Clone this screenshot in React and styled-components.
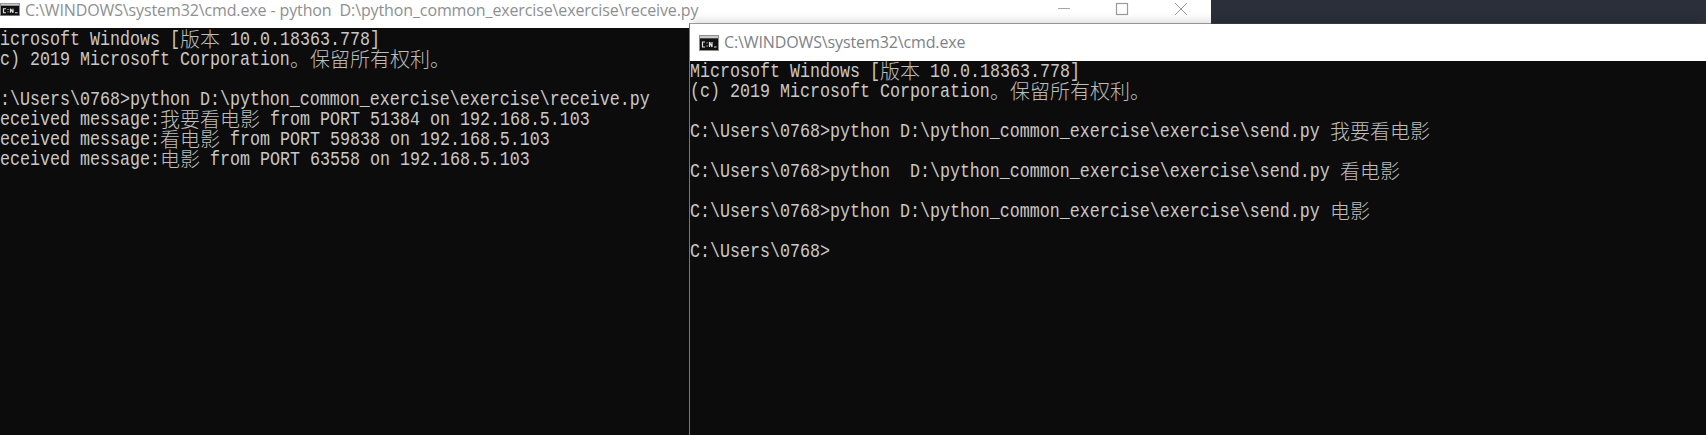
import React from 'react';
import styled, { createGlobalStyle } from 'styled-components';

const Global = createGlobalStyle`
  html, body { margin: 0; padding: 0; background: #0c0c0c; }
  #root { width: 1706px; height: 435px; }
`;

const Desktop = styled.div`
  position: relative;
  width: 1706px;
  height: 435px;
  overflow: hidden;
  background: linear-gradient(#2a2f3a, #272c37);
`;

const Window = styled.section`
  position: absolute;
  display: flex;
  flex-direction: column;
  left: ${p => p.$left}px;
  top: ${p => p.$top}px;
  width: ${p => p.$width}px;
  height: ${p => p.$height}px;
  overflow: ${p => (p.$front ? 'visible' : 'hidden')};
  background: #0c0c0c;
  background-clip: padding-box;
  ${p => p.$front && `
    box-sizing: border-box;
    border-left: 1px solid #777;
    border-top: 1px solid rgba(70, 70, 70, 0.5);
    box-shadow: 0 -6px 8px -3px rgba(0, 0, 0, 0.13);
  `}
`;

const TitleBar = styled.header`
  flex: none;
  display: flex;
  align-items: ${p => (p.$front ? 'center' : 'flex-start')};
  height: ${p => p.$height}px;
  box-sizing: border-box;
  padding-left: ${p => p.$pad}px;
  background: #fff;
  font-family: "Open Sans", "Noto Sans", sans-serif;
  font-size: 16px;
  white-space: pre;
`;

const TitleText = styled.span`
  margin-left: 5px;
  margin-bottom: ${p => (p.$front ? 2 : 0)}px;
  line-height: 20px;
  letter-spacing: -0.12px;
  color: ${p => (p.$front ? '#7d8289' : '#8d8f91')};
`;

const WinControls = styled.div`
  margin-left: auto;
  display: flex;
  width: 153px;
`;

const Console = styled.div`
  flex: 1;
  padding-top: ${p => p.$top}px;
  margin-left: ${p => p.$shift}px;
  background: #0c0c0c;
  color: #c8c8c8;
  line-height: 20px;
  white-space: pre;
`;

const Line = styled.div`
  display: flex;
  height: 20px;
`;

const Latin = styled.span`
  flex: none;
  display: block;
  width: ${p => p.$n * 10}px;
  font-family: "Liberation Mono", monospace;
  font-size: 16.66px;
  transform: scaleY(1.2);
  transform-origin: center;
`;

const Cjk = styled.span`
  flex: none;
  width: ${p => p.$n * 20}px;
  font-family: "Noto Sans CJK SC", sans-serif;
  font-weight: 300;
  font-size: 20px;
  line-height: 18px;
  color: #bdbdbd;
`;

const Svg = styled.svg`
  flex: none;
  display: block;
  margin-top: ${p => p.$top}px;
`;

const CmdIcon = ({ top, height }) => (
  <Svg $top={top} width="20" height={height} viewBox="0 0 20 16" preserveAspectRatio="none">
    <rect x="0" y="0" width="20" height="16" fill="#8f8f8f" />
    <rect x="1" y="1" width="18" height="2" fill="#c9c9c9" />
    <rect x="1" y="3.5" width="18" height="11.5" fill="#111" />
    <path d="M6 7H3.5V12H6M8 7.5v.8M8 10.6v.8M10.5 12V7L13 12V7M15 12h2.5" stroke="#e2e2e2" strokeWidth="1.2" fill="none" />
  </Svg>
);

const Controls = () => (
  <Svg $top={2} width="153" height="16" viewBox="0 0 153 16">
    <path d="M0 6.5H12" stroke="#a8a8a8" strokeWidth="1" />
    <rect x="58.5" y="1.5" width="11" height="11" fill="none" stroke="#9a9a9a" strokeWidth="1.2" />
    <path d="M117 1L129 13M129 1L117 13" stroke="#999" strokeWidth="1" />
  </Svg>
);

const isCjk = c => /[\u3000-\u9fff]/.test(c);

const ConsoleLine = ({ text }) => {
  const parts = text.match(/[\u3000-\u9fff]+|[^\u3000-\u9fff]+/g) || [];
  return (
    <Line>
      {parts.map((p, i) =>
        isCjk(p[0]) ? <Cjk key={i} $n={p.length}>{p}</Cjk> : <Latin key={i} $n={p.length}>{p}</Latin>
      )}
    </Line>
  );
};

const backLines = [
  'Microsoft Windows [版本 10.0.18363.778]',
  '(c) 2019 Microsoft Corporation。保留所有权利。',
  ' ',
  'C:\\Users\\0768>python D:\\python_common_exercise\\exercise\\receive.py',
  'Received message:我要看电影 from PORT 51384 on 192.168.5.103',
  'Received message:看电影 from PORT 59838 on 192.168.5.103',
  'Received message:电影 from PORT 63558 on 192.168.5.103',
];

const frontLines = [
  'Microsoft Windows [版本 10.0.18363.778]',
  '(c) 2019 Microsoft Corporation。保留所有权利。',
  ' ',
  'C:\\Users\\0768>python D:\\python_common_exercise\\exercise\\send.py 我要看电影',
  ' ',
  'C:\\Users\\0768>python  D:\\python_common_exercise\\exercise\\send.py 看电影',
  ' ',
  'C:\\Users\\0768>python D:\\python_common_exercise\\exercise\\send.py 电影',
  ' ',
  'C:\\Users\\0768>',
];

export default function App() {
  return (
    <Desktop>
      <Global />
      <Window $left={0} $top={0} $width={1211} $height={435}>
        <TitleBar $height={28} $pad={0}>
          <CmdIcon top={3} height={13} />
          <TitleText>{'C:\\WINDOWS\\system32\\cmd.exe - python  D:\\python_common_exercise\\exercise\\receive.py'}</TitleText>
          <WinControls><Controls /></WinControls>
        </TitleBar>
        <Console $top={2} $shift={-10}>
          {backLines.map((l, i) => <ConsoleLine key={i} text={l} />)}
        </Console>
      </Window>
      <Window $front $left={689} $top={23} $width={1017} $height={412}>
        <TitleBar $front $height={37} $pad={9}>
          <CmdIcon top={0} height={16} />
          <TitleText $front>{'C:\\WINDOWS\\system32\\cmd.exe'}</TitleText>
        </TitleBar>
        <Console $top={1} $shift={0}>
          {frontLines.map((l, i) => <ConsoleLine key={i} text={l} />)}
        </Console>
      </Window>
    </Desktop>
  );
}
